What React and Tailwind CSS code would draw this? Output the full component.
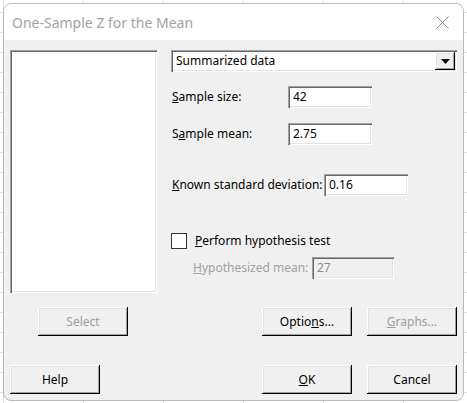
import React from "react";

const font = { fontFamily: '"Noto Sans", "Open Sans", sans-serif' };

// classic win32 3d edges
const sunken =
  "shadow-[inset_1px_1px_0_#a0a0a0,inset_2px_2px_0_#696969,inset_-1px_-1px_0_#ffffff,inset_-2px_-2px_0_#e3e3e3]";
const raised =
  "shadow-[inset_-1px_-1px_0_#000000,inset_1px_1px_0_#ffffff,inset_-2px_-2px_0_#a0a0a0,inset_2px_2px_0_#e3e3e3]";

const Btn = ({ children, disabled, className = "" }) => (
  <button
    className={`h-[29px] w-[90px] bg-[#f0f0f0] text-[12px] ${raised} ${
      disabled ? "text-[#a0a0a0]" : "text-black"
    } ${className}`}
  >
    {children}
  </button>
);

const Field = ({ value, width, disabled }) => (
  <div
    className={`h-[22px] ${width} flex items-center px-[5px] text-[12px] ${sunken} ${
      disabled ? "bg-[#f0f0f0] text-[#8c8c8c]" : "bg-white text-black"
    }`}
  >
    {value}
  </div>
);

export default function App() {
  return (
    <div
      style={font}
      className="w-[467px] h-[403px] overflow-hidden pt-[3px] pl-[3px] bg-white bg-[linear-gradient(to_right,#e2e2e2_1px,transparent_1px),linear-gradient(to_bottom,#e2e2e2_1px,transparent_1px)] bg-[size:80px_20px] bg-[position:3px_12px]"
    >
      <div className="w-[461px] h-[398px] rounded-[8px] border border-[#b9b9b9] bg-[#f0f0f0] overflow-hidden flex flex-col">
        {/* title bar */}
        <div className="h-[36px] bg-white flex items-center justify-between pl-[8px] pr-[14px] shrink-0">
          <span className="text-[14px] text-[#a3a3a3]">One-Sample Z for the Mean</span>
          <svg width="13" height="13" viewBox="0 0 13 13" className="text-[#8a8a8a]">
            <path d="M0.5 0.5 L12.5 12.5 M12.5 0.5 L0.5 12.5" stroke="currentColor" strokeWidth="1" />
          </svg>
        </div>

        <div className="flex flex-1 flex-col pl-[6px] pt-[10px] text-[12px] text-black">
          <div className="flex">
            {/* variable list */}
            <div className={`w-[147px] h-[243px] bg-white ${sunken}`} />

            <div className="ml-[14px] flex flex-col w-[286px]">
              <div className={`h-[22px] bg-white flex items-center justify-between pl-[5px] pr-[2px] ${sunken}`}>
                <span>Summarized data</span>
                <div className={`w-[20px] h-[18px] bg-[#f0f0f0] flex items-center justify-center ${raised}`}>
                  <svg width="9" height="5" viewBox="0 0 9 5">
                    <path d="M0 0 H9 L4.5 5 Z" fill="#000" />
                  </svg>
                </div>
              </div>

              <div className="mt-[14px] flex items-center">
                <span className="w-[117px] pl-[1px]">
                  <u>S</u>ample size:
                </span>
                <Field value="42" width="w-[84px]" />
              </div>

              <div className="mt-[15px] flex items-center">
                <span className="w-[117px] pl-[1px]">
                  S<u>a</u>mple mean:
                </span>
                <Field value="2.75" width="w-[84px]" />
              </div>

              <div className="mt-[29px] flex items-center">
                <span className="w-[153px] pl-[1px]">
                  <u>K</u>nown standard deviation:
                </span>
                <Field value="0.16" width="w-[84px]" />
              </div>

              <div className="mt-[36px] flex items-center">
                <div className="w-[16px] h-[16px] bg-white border border-[#333]" />
                <span className="ml-[8px]">
                  <u>P</u>erform hypothesis test
                </span>
              </div>

              <div className="mt-[7px] flex items-center pl-[22px] text-[#a0a0a0]">
                <span className="w-[119px]">
                  <u>H</u>ypothesized mean:
                </span>
                <Field value="27" width="w-[82px]" disabled />
              </div>
            </div>
          </div>

          {/* action buttons */}
          <div className="mt-[14px] flex">
            <Btn disabled className="ml-[28px]">
              Select
            </Btn>
            <Btn className="ml-[134px]">
              Optio<u>n</u>s...
            </Btn>
            <Btn disabled className="ml-[15px]">
              <u>G</u>raphs...
            </Btn>
          </div>

          <div className="mt-[29px] flex">
            <Btn>Help</Btn>
            <Btn className="ml-[162px]">
              <u>O</u>K
            </Btn>
            <Btn className="ml-[15px]">Cancel</Btn>
          </div>
        </div>
      </div>
    </div>
  );
}
